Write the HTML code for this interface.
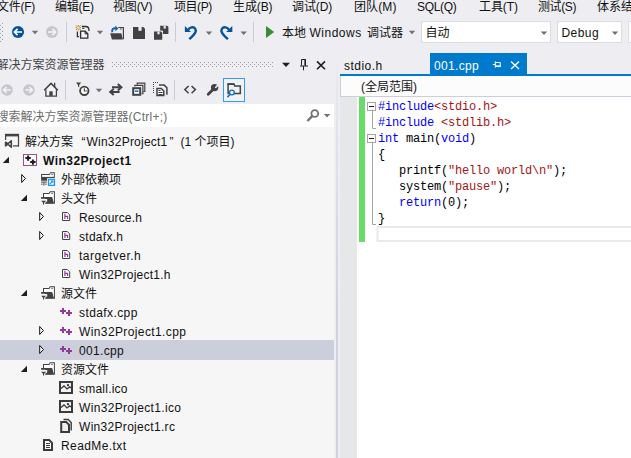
<!DOCTYPE html>
<html><head><meta charset="utf-8">
<style>
html,body{margin:0;padding:0;}
body{width:631px;height:458px;overflow:hidden;background:#EEEEF2;position:relative;font-family:"Liberation Sans","Noto Sans CJK SC",sans-serif;font-size:12px;color:#111;}
.a{position:absolute;white-space:nowrap;}
.t{position:absolute;white-space:nowrap;line-height:19px;height:19px;}
.mi{position:absolute;top:-2px;line-height:19px;font-size:12px;white-space:nowrap;}
.code{position:absolute;left:378px;white-space:pre;font-family:"Liberation Mono",monospace;font-size:12px;line-height:16px;letter-spacing:-0.2px;color:#000;}
.k{color:#0000FF}.s{color:#A31515}
svg{position:absolute;overflow:visible}
</style></head><body>
<div class="mi" style="left:-3px;letter-spacing:-0.25px">文件(F)</div>
<div class="mi" style="left:55px;letter-spacing:-0.28px">编辑(E)</div>
<div class="mi" style="left:113px;letter-spacing:-0.14px">视图(V)</div>
<div class="mi" style="left:174px;letter-spacing:-0.44px">项目(P)</div>
<div class="mi" style="left:233px;letter-spacing:-0.12px">生成(B)</div>
<div class="mi" style="left:292px;letter-spacing:-0.1px">调试(D)</div>
<div class="mi" style="left:354px;letter-spacing:0.1px">团队(M)</div>
<div class="mi" style="left:417px;letter-spacing:-0.33px">SQL(Q)</div>
<div class="mi" style="left:479px;letter-spacing:-0.08px">工具(T)</div>
<div class="mi" style="left:538px;letter-spacing:-0.4px">测试(S)</div>
<div class="mi" style="left:597px;letter-spacing:0px">体系结构</div>
<div class="a" style="left:282px;top:24px;line-height:19px">本地</div>
<div class="a" id="tbtxt" style="left:309.5px;top:24px;line-height:19px;letter-spacing:.5px">Windows</div>
<div class="a" style="left:367px;top:24px;line-height:19px">调试器</div>
<div class="a" style="left:421px;top:21px;width:130px;height:22px;background:#fff;border:1px solid #DBDDE6;box-sizing:border-box"></div>
<div class="a" style="left:425.5px;top:24px;line-height:19px">自动</div>
<div class="a" style="left:557px;top:21px;width:65px;height:22px;background:#fff;border:1px solid #DBDDE6;box-sizing:border-box"></div>
<div class="a" id="dbg" style="left:561.5px;top:24px;line-height:19px;letter-spacing:.44px">Debug</div>
<div class="a" style="left:628px;top:21px;width:10px;height:22px;background:#fff;border:1px solid #DBDDE6;box-sizing:border-box"></div>

<div class="a" id="setitle" style="left:-3.5px;top:56px;line-height:19px;color:#444">解决方案资源管理器</div>
<div class="a" style="left:0;top:104px;width:334px;height:23px;background:#fff"></div>
<div class="a" style="left:0;top:127px;width:334px;height:331px;background:#F6F6F6"></div>
<div class="a" style="left:336px;top:56px;width:2px;height:402px;background:linear-gradient(to bottom,#EEEEF2 0px,#E7E8EF 25px,#E1E2EB 80px,#D0D2DF 250px,#CFD1DE 402px)"></div>
<div class="a" id="srch" style="left:-3.5px;top:107.5px;line-height:19px;color:#6D6D6D">搜索解决方案资源管理器<span style="letter-spacing:.25px">(Ctrl+;)</span></div>
<div class="a" style="left:0;top:339.5px;width:334px;height:20px;background:#CCCEDB"></div>
<div class="t" id="r0" style="left:25px;top:133px">解决方案</div><div class="t" style="left:81.5px;top:133px">“</div><div class="t" id="r0b" style="left:86.5px;top:133px;letter-spacing:.23px">Win32Project1</div><div class="t" style="left:169.5px;top:133px">”</div><div class="t" id="r0c" style="left:180.5px;top:133px">(1 个项目)</div>
<div class="t" id="r1" style="left:43px;top:152px;font-weight:bold;letter-spacing:0.462px;">Win32Project1</div>
<div class="t" id="r2" style="left:61px;top:171px;">外部依赖项</div>
<div class="t" id="r3" style="left:61px;top:190px;">头文件</div>
<div class="t" id="r4" style="left:79px;top:209px;letter-spacing:0.160px;">Resource.h</div>
<div class="t" id="r5" style="left:79px;top:228px;letter-spacing:0.281px;">stdafx.h</div>
<div class="t" id="r6" style="left:79px;top:247px;letter-spacing:0.505px;">targetver.h</div>
<div class="t" id="r7" style="left:79px;top:266px;letter-spacing:0.250px;">Win32Project1.h</div>
<div class="t" id="r8" style="left:61px;top:285px;">源文件</div>
<div class="t" id="r9" style="left:79px;top:304px;letter-spacing:0.405px;">stdafx.cpp</div>
<div class="t" id="r10" style="left:79px;top:323px;letter-spacing:0.385px;">Win32Project1.cpp</div>
<div class="t" id="r11" style="left:79px;top:342px;letter-spacing:0.329px;">001.cpp</div>
<div class="t" id="r12" style="left:61px;top:361px;">资源文件</div>
<div class="t" id="r13" style="left:79px;top:380px;letter-spacing:0.228px;">small.ico</div>
<div class="t" id="r14" style="left:79px;top:399px;letter-spacing:0.326px;">Win32Project1.ico</div>
<div class="t" id="r15" style="left:79px;top:418px;letter-spacing:0.303px;">Win32Project1.rc</div>
<div class="t" id="r16" style="left:61px;top:437px;letter-spacing:0.410px;">ReadMe.txt</div>

<div class="a" style="left:430px;top:53px;width:97px;height:21px;background:#007ACC"></div>
<div class="a" style="left:340px;top:74px;width:291px;height:2px;background:#007ACC"></div>
<div class="a" id="tab1" style="left:344px;top:56.5px;line-height:19px;letter-spacing:.46px">stdio.h</div>
<div class="a" id="tab2" style="left:434px;top:56.5px;line-height:19px;color:#fff;letter-spacing:.33px">001.cpp</div>
<div class="a" style="left:340px;top:76px;width:291px;height:21px;background:#FCFCFC;border-left:1px solid #CCCEDB;border-bottom:1px solid #CCCEDB;box-sizing:border-box"></div>
<div class="a" id="nav" style="left:361px;top:78px;line-height:19px">(全局范围)</div>
<div class="a" style="left:340px;top:97px;width:291px;height:361px;background:#fff"></div>
<div class="a" style="left:340px;top:97px;width:17px;height:361px;background:#E6E7E8"></div>
<div class="a" style="left:359px;top:97px;width:5.5px;height:144.5px;background:#68DC68"></div>
<svg width="631" height="458" viewBox="0 0 631 458" style="left:0;top:0">
<rect x="2" y="23" width="1" height="1" fill="#999"/>
<rect x="0" y="25" width="1" height="1" fill="#999"/>
<rect x="2" y="27" width="1" height="1" fill="#999"/>
<rect x="0" y="29" width="1" height="1" fill="#999"/>
<rect x="2" y="31" width="1" height="1" fill="#999"/>
<rect x="0" y="33" width="1" height="1" fill="#999"/>
<rect x="2" y="35" width="1" height="1" fill="#999"/>
<rect x="0" y="37" width="1" height="1" fill="#999"/>
<rect x="2" y="39" width="1" height="1" fill="#999"/>
<rect x="0" y="41" width="1" height="1" fill="#999"/>
<circle cx="18" cy="32" r="6" fill="#00539C"/>
<path d="M22,32 H14.6 M17.6,28.8 L14.4,32 L17.6,35.2" stroke="#fff" stroke-width="1.7" fill="none"/>
<polygon points="31.8,30.699999999999996 38.2,30.699999999999996 35,34.199999999999996" fill="#717171"/>
<circle cx="52" cy="32" r="6" fill="#C6C7CD"/>
<path d="M48,32 H55.4 M52.4,28.8 L55.6,32 L52.4,35.2" stroke="#F4F4F7" stroke-width="1.7" fill="none"/>
<rect x="66" y="22" width="1" height="20" fill="#C9CBDB"/>
<rect x="175" y="22" width="1" height="20" fill="#C9CBDB"/>
<rect x="253" y="22" width="1" height="20" fill="#C9CBDB"/>
<path d="M76,25.4 L77.4,26.8 M79.2,28.6 L80.6,30 M80.6,25.4 L79.2,26.8 M77.4,28.6 L76,30 M78.3,25 V26.6 M78.3,28.8 V30.4 M75.6,27.7 H77.2 M79.4,27.7 H81" stroke="#C27D1A" stroke-width="1" fill="none"/>
<path d="M81.8,26.5 H85.6 C87.6,26.6 88.9,27.8 88.9,29.6 V31" stroke="#2E2E2E" stroke-width="1.3" fill="none"/>
<path d="M82.2,28.3 H84.4" stroke="#2E2E2E" stroke-width="1" fill="none"/>
<path d="M77.4,31.4 V36.6 H79" stroke="#2E2E2E" stroke-width="1.3" fill="none"/>
<path d="M80.6,31.2 H85.2 L87.8,33.8 V38.2 H80.6 Z" stroke="#2E2E2E" stroke-width="1.3" fill="#F4F4F6"/>
<path d="M85.1,31.3 V33.9 H87.7" stroke="#2E2E2E" stroke-width="1" fill="none"/>
<polygon points="96.8,30.699999999999996 103.2,30.699999999999996 100,34.199999999999996" fill="#717171"/>
<path d="M118.2,27.5 H123.4 V39.2" stroke="#424242" stroke-width="1.2" fill="none"/>
<rect x="119.9" y="28.5" width="1.8" height="1" fill="#424242"/>
<polygon points="110.2,33.2 121.3,33.2 122.9,39.4 111.9,39.4" fill="#424242"/>
<path d="M112.3,32.2 C111.6,29.4 113,27.8 116.4,28.4" stroke="#145FB8" stroke-width="1.9" fill="none"/>
<polygon points="115.4,25.6 118.4,28.5 115.4,31.2" fill="#145FB8"/>
<path d="M133,27 H143.2 L145,28.8 V39 H133 Z" fill="#424242"/>
<rect x="138.4" y="27" width="3.2" height="3.8" fill="#EEEEF2"/>
<path d="M160.2,25.8 H167.2 L168.4,27 V34 H160.2 Z" fill="#424242"/>
<rect x="163.6" y="25.8" width="2.2" height="2.8" fill="#EEEEF2"/>
<rect x="153.2" y="30.6" width="9.8" height="9.8" fill="#EEEEF2"/>
<path d="M154,31.5 H161 L162.2,32.7 V39.8 H154 Z" fill="#424242"/>
<rect x="157.4" y="31.5" width="2.2" height="2.8" fill="#EEEEF2"/>
<path d="M188.3,29.7 C189.6,27.4 193.6,26.2 195.3,28.8 C196.9,31.3 195.2,33.4 189.3,39.2" stroke="#00539C" stroke-width="2.4" fill="none"/><polygon points="184.9,26 184.9,32.1 191,32.1" fill="#00539C"/>
<polygon points="205.8,31.4 212.2,31.4 209,34.9" fill="#717171"/>
<g transform="translate(417.2,0) scale(-1,1)"><path d="M188.3,29.7 C189.6,27.4 193.6,26.2 195.3,28.8 C196.9,31.3 195.2,33.4 189.3,39.2" stroke="#00539C" stroke-width="2.4" fill="none"/><polygon points="184.9,26 184.9,32.1 191,32.1" fill="#00539C"/></g>
<polygon points="240.5,31.4 246.89999999999998,31.4 243.7,34.9" fill="#717171"/>
<polygon points="266,26 266,38 274.2,32" fill="#388A34"/>
<polygon points="408.8,30.699999999999996 415.2,30.699999999999996 412,34.199999999999996" fill="#717171"/>
<polygon points="540.8,31.4 547.2,31.4 544,34.9" fill="#717171"/>
<polygon points="611.8,31.4 618.2,31.4 615,34.9" fill="#717171"/>
<rect x="112" y="62" width="1" height="1" fill="#9a9a9a"/><rect x="112" y="66" width="1" height="1" fill="#9a9a9a"/>
<rect x="114" y="64" width="1" height="1" fill="#9a9a9a"/>
<rect x="116" y="62" width="1" height="1" fill="#9a9a9a"/><rect x="116" y="66" width="1" height="1" fill="#9a9a9a"/>
<rect x="118" y="64" width="1" height="1" fill="#9a9a9a"/>
<rect x="120" y="62" width="1" height="1" fill="#9a9a9a"/><rect x="120" y="66" width="1" height="1" fill="#9a9a9a"/>
<rect x="122" y="64" width="1" height="1" fill="#9a9a9a"/>
<rect x="124" y="62" width="1" height="1" fill="#9a9a9a"/><rect x="124" y="66" width="1" height="1" fill="#9a9a9a"/>
<rect x="126" y="64" width="1" height="1" fill="#9a9a9a"/>
<rect x="128" y="62" width="1" height="1" fill="#9a9a9a"/><rect x="128" y="66" width="1" height="1" fill="#9a9a9a"/>
<rect x="130" y="64" width="1" height="1" fill="#9a9a9a"/>
<rect x="132" y="62" width="1" height="1" fill="#9a9a9a"/><rect x="132" y="66" width="1" height="1" fill="#9a9a9a"/>
<rect x="134" y="64" width="1" height="1" fill="#9a9a9a"/>
<rect x="136" y="62" width="1" height="1" fill="#9a9a9a"/><rect x="136" y="66" width="1" height="1" fill="#9a9a9a"/>
<rect x="138" y="64" width="1" height="1" fill="#9a9a9a"/>
<rect x="140" y="62" width="1" height="1" fill="#9a9a9a"/><rect x="140" y="66" width="1" height="1" fill="#9a9a9a"/>
<rect x="142" y="64" width="1" height="1" fill="#9a9a9a"/>
<rect x="144" y="62" width="1" height="1" fill="#9a9a9a"/><rect x="144" y="66" width="1" height="1" fill="#9a9a9a"/>
<rect x="146" y="64" width="1" height="1" fill="#9a9a9a"/>
<rect x="148" y="62" width="1" height="1" fill="#9a9a9a"/><rect x="148" y="66" width="1" height="1" fill="#9a9a9a"/>
<rect x="150" y="64" width="1" height="1" fill="#9a9a9a"/>
<rect x="152" y="62" width="1" height="1" fill="#9a9a9a"/><rect x="152" y="66" width="1" height="1" fill="#9a9a9a"/>
<rect x="154" y="64" width="1" height="1" fill="#9a9a9a"/>
<rect x="156" y="62" width="1" height="1" fill="#9a9a9a"/><rect x="156" y="66" width="1" height="1" fill="#9a9a9a"/>
<rect x="158" y="64" width="1" height="1" fill="#9a9a9a"/>
<rect x="160" y="62" width="1" height="1" fill="#9a9a9a"/><rect x="160" y="66" width="1" height="1" fill="#9a9a9a"/>
<rect x="162" y="64" width="1" height="1" fill="#9a9a9a"/>
<rect x="164" y="62" width="1" height="1" fill="#9a9a9a"/><rect x="164" y="66" width="1" height="1" fill="#9a9a9a"/>
<rect x="166" y="64" width="1" height="1" fill="#9a9a9a"/>
<rect x="168" y="62" width="1" height="1" fill="#9a9a9a"/><rect x="168" y="66" width="1" height="1" fill="#9a9a9a"/>
<rect x="170" y="64" width="1" height="1" fill="#9a9a9a"/>
<rect x="172" y="62" width="1" height="1" fill="#9a9a9a"/><rect x="172" y="66" width="1" height="1" fill="#9a9a9a"/>
<rect x="174" y="64" width="1" height="1" fill="#9a9a9a"/>
<rect x="176" y="62" width="1" height="1" fill="#9a9a9a"/><rect x="176" y="66" width="1" height="1" fill="#9a9a9a"/>
<rect x="178" y="64" width="1" height="1" fill="#9a9a9a"/>
<rect x="180" y="62" width="1" height="1" fill="#9a9a9a"/><rect x="180" y="66" width="1" height="1" fill="#9a9a9a"/>
<rect x="182" y="64" width="1" height="1" fill="#9a9a9a"/>
<rect x="184" y="62" width="1" height="1" fill="#9a9a9a"/><rect x="184" y="66" width="1" height="1" fill="#9a9a9a"/>
<rect x="186" y="64" width="1" height="1" fill="#9a9a9a"/>
<rect x="188" y="62" width="1" height="1" fill="#9a9a9a"/><rect x="188" y="66" width="1" height="1" fill="#9a9a9a"/>
<rect x="190" y="64" width="1" height="1" fill="#9a9a9a"/>
<rect x="192" y="62" width="1" height="1" fill="#9a9a9a"/><rect x="192" y="66" width="1" height="1" fill="#9a9a9a"/>
<rect x="194" y="64" width="1" height="1" fill="#9a9a9a"/>
<rect x="196" y="62" width="1" height="1" fill="#9a9a9a"/><rect x="196" y="66" width="1" height="1" fill="#9a9a9a"/>
<rect x="198" y="64" width="1" height="1" fill="#9a9a9a"/>
<rect x="200" y="62" width="1" height="1" fill="#9a9a9a"/><rect x="200" y="66" width="1" height="1" fill="#9a9a9a"/>
<rect x="202" y="64" width="1" height="1" fill="#9a9a9a"/>
<rect x="204" y="62" width="1" height="1" fill="#9a9a9a"/><rect x="204" y="66" width="1" height="1" fill="#9a9a9a"/>
<rect x="206" y="64" width="1" height="1" fill="#9a9a9a"/>
<rect x="208" y="62" width="1" height="1" fill="#9a9a9a"/><rect x="208" y="66" width="1" height="1" fill="#9a9a9a"/>
<rect x="210" y="64" width="1" height="1" fill="#9a9a9a"/>
<rect x="212" y="62" width="1" height="1" fill="#9a9a9a"/><rect x="212" y="66" width="1" height="1" fill="#9a9a9a"/>
<rect x="214" y="64" width="1" height="1" fill="#9a9a9a"/>
<rect x="216" y="62" width="1" height="1" fill="#9a9a9a"/><rect x="216" y="66" width="1" height="1" fill="#9a9a9a"/>
<rect x="218" y="64" width="1" height="1" fill="#9a9a9a"/>
<rect x="220" y="62" width="1" height="1" fill="#9a9a9a"/><rect x="220" y="66" width="1" height="1" fill="#9a9a9a"/>
<rect x="222" y="64" width="1" height="1" fill="#9a9a9a"/>
<rect x="224" y="62" width="1" height="1" fill="#9a9a9a"/><rect x="224" y="66" width="1" height="1" fill="#9a9a9a"/>
<rect x="226" y="64" width="1" height="1" fill="#9a9a9a"/>
<rect x="228" y="62" width="1" height="1" fill="#9a9a9a"/><rect x="228" y="66" width="1" height="1" fill="#9a9a9a"/>
<rect x="230" y="64" width="1" height="1" fill="#9a9a9a"/>
<rect x="232" y="62" width="1" height="1" fill="#9a9a9a"/><rect x="232" y="66" width="1" height="1" fill="#9a9a9a"/>
<rect x="234" y="64" width="1" height="1" fill="#9a9a9a"/>
<rect x="236" y="62" width="1" height="1" fill="#9a9a9a"/><rect x="236" y="66" width="1" height="1" fill="#9a9a9a"/>
<rect x="238" y="64" width="1" height="1" fill="#9a9a9a"/>
<rect x="240" y="62" width="1" height="1" fill="#9a9a9a"/><rect x="240" y="66" width="1" height="1" fill="#9a9a9a"/>
<rect x="242" y="64" width="1" height="1" fill="#9a9a9a"/>
<rect x="244" y="62" width="1" height="1" fill="#9a9a9a"/><rect x="244" y="66" width="1" height="1" fill="#9a9a9a"/>
<rect x="246" y="64" width="1" height="1" fill="#9a9a9a"/>
<rect x="248" y="62" width="1" height="1" fill="#9a9a9a"/><rect x="248" y="66" width="1" height="1" fill="#9a9a9a"/>
<rect x="250" y="64" width="1" height="1" fill="#9a9a9a"/>
<rect x="252" y="62" width="1" height="1" fill="#9a9a9a"/><rect x="252" y="66" width="1" height="1" fill="#9a9a9a"/>
<rect x="254" y="64" width="1" height="1" fill="#9a9a9a"/>
<rect x="256" y="62" width="1" height="1" fill="#9a9a9a"/><rect x="256" y="66" width="1" height="1" fill="#9a9a9a"/>
<rect x="258" y="64" width="1" height="1" fill="#9a9a9a"/>
<rect x="260" y="62" width="1" height="1" fill="#9a9a9a"/><rect x="260" y="66" width="1" height="1" fill="#9a9a9a"/>
<rect x="262" y="64" width="1" height="1" fill="#9a9a9a"/>
<rect x="264" y="62" width="1" height="1" fill="#9a9a9a"/><rect x="264" y="66" width="1" height="1" fill="#9a9a9a"/>
<rect x="266" y="64" width="1" height="1" fill="#9a9a9a"/>
<rect x="268" y="62" width="1" height="1" fill="#9a9a9a"/><rect x="268" y="66" width="1" height="1" fill="#9a9a9a"/>
<rect x="270" y="64" width="1" height="1" fill="#9a9a9a"/>
<rect x="272" y="62" width="1" height="1" fill="#9a9a9a"/><rect x="272" y="66" width="1" height="1" fill="#9a9a9a"/>
<polygon points="282,62.8 290,62.8 286,67" fill="#1E1E1E"/>
<path d="M301.5,59.5 H305.5 V65.5 M301.5,59.5 V65.5 M300,66 H308 M303.5,66 V70.3" stroke="#1E1E1E" stroke-width="1" fill="none"/><rect x="304.4" y="59.5" width="1.6" height="6" fill="#1E1E1E"/>
<path d="M317,61.4 L325,69.2 M325,61.4 L317,69.2" stroke="#1E1E1E" stroke-width="1.6" fill="none"/>
<circle cx="7" cy="90" r="5.8" fill="#C6C7CD"/>
<path d="M10.6,90 H3.8 M6.6,87 L3.6,90 L6.6,93" stroke="#F4F4F7" stroke-width="1.6" fill="none"/>
<circle cx="29" cy="90" r="5.8" fill="#C6C7CD"/>
<path d="M25.4,90 H32.2 M29.4,87 L32.4,90 L29.4,93" stroke="#F4F4F7" stroke-width="1.6" fill="none"/>
<path d="M45.9,89.6 V96.2 H56.4 V89.6 L51,84.4 Z" fill="#F4F4F6" stroke="none"/>
<path d="M45.9,89.4 V96.2 H56.4 V89.4" stroke="#424242" stroke-width="1.3" fill="none"/>
<path d="M44.2,90.3 L51,83.5 L57.8,90.3" stroke="#424242" stroke-width="1.6" fill="none"/>
<rect x="54" y="82.8" width="1.3" height="4.4" fill="#424242"/>
<rect x="49.3" y="91.3" width="3.4" height="4.6" fill="#424242"/>
<rect x="65" y="80" width="1" height="20" fill="#C9CBDB"/>
<rect x="174" y="80" width="1" height="20" fill="#C9CBDB"/>
<circle cx="84.3" cy="90.8" r="4.2" fill="#fff" stroke="#424242" stroke-width="1.9"/>
<path d="M84.3,88.2 V91 H86.8" stroke="#424242" stroke-width="1.1" fill="none"/>
<polygon points="76,82.6 81.2,82.6 79.2,85 79.2,87.4 78,86.6 78,85" fill="#424242"/>
<polygon points="95.8,88.7 102.2,88.7 99,92.2" fill="#717171"/>
<path d="M112,87.2 H121 M117.8,84 L121.4,87.2 L117.8,90.4" stroke="#424242" stroke-width="2" fill="none"/>
<path d="M119.6,91.9 H110.6 M113.8,88.7 L110.2,91.9 L113.8,95.1" stroke="#424242" stroke-width="2" fill="none"/>
<path d="M137.2,84.4 V83.1 H144.8 V91.5 H143.6 M134.8,86.6 V85.3 H142.9 V93.6 H141.6" stroke="#424242" stroke-width="1.2" fill="none"/>
<rect x="133.2" y="88.2" width="7" height="6.6" fill="#fff" stroke="#424242" stroke-width="2"/>
<rect x="134.8" y="90.4" width="3.7" height="1.5" fill="#0E70C0"/>
<rect x="153" y="82" width="1" height="1" fill="#424242"/>
<rect x="153" y="84" width="1" height="1" fill="#424242"/>
<rect x="153" y="86" width="1" height="1" fill="#424242"/>
<rect x="153" y="88" width="1" height="1" fill="#424242"/>
<rect x="153" y="90" width="1" height="1" fill="#424242"/>
<rect x="153" y="92" width="1" height="1" fill="#424242"/>
<rect x="155" y="82" width="1" height="1" fill="#424242"/>
<rect x="157" y="82" width="1" height="1" fill="#424242"/>
<path d="M159,85.1 H164.2 L166.9,87.8 V94.8" stroke="#424242" stroke-width="1.5" fill="none"/>
<path d="M157,88.4 H161.2 L163.8,91 V95.6 H157 Z" fill="#fff" stroke="#424242" stroke-width="1.5"/>
<path d="M158.4,90.5 H160.6 M158.4,92.5 H162.6 M158.4,94.5 H162.6" stroke="#424242" stroke-width="1" fill="none"/>
<path d="M188.6,86 L184.8,89.6 L188.6,93.2 M191.6,86 L195.4,89.6 L191.6,93.2" stroke="#424242" stroke-width="1.5" fill="none"/>
<path d="M213,89.6 L208.2,94.2" stroke="#424242" stroke-width="2.8" stroke-linecap="round" fill="none"/>
<circle cx="214.6" cy="87.6" r="3.7" fill="#424242"/>
<polygon points="214.6,87.4 218.4,83.2 219.6,84.6 216,88.2" fill="#EEEEF2"/>
<rect x="223.5" y="78.5" width="21" height="23" fill="#F0F2F8" stroke="#3399FF" stroke-width="1"/>
<path d="M228.1,84.2 H234 L234.8,86 H240.3 V93.4 H228.1 Z" fill="none" stroke="#424242" stroke-width="1.5"/>
<rect x="227.4" y="83.2" width="7" height="1.8" fill="#424242"/>
<circle cx="231.9" cy="92.5" r="2.4" fill="#F0F2F8" stroke="#0E70C0" stroke-width="1.3"/>
<path d="M230.3,94.2 L227.4,97.1" stroke="#0E70C0" stroke-width="1.6" fill="none"/>
<circle cx="314.8" cy="113.5" r="3.4" fill="none" stroke="#717171" stroke-width="1.8"/>
<path d="M312.5,115.9 L307.4,121" stroke="#717171" stroke-width="2.4" fill="none"/>
<polygon points="323.8,113.9 330.2,113.9 327,117.4" fill="#717171"/>
<polygon points="9,156.8 9,163.0 2.8,163.0" fill="#1E1E1E"/>
<polygon points="21.7,174.5 21.7,182.5 25.4,178.5" fill="#fff" stroke="#111" stroke-width="1"/>
<polygon points="27,194.8 27,201.0 20.8,201.0" fill="#1E1E1E"/>
<polygon points="39.7,212.5 39.7,220.5 43.4,216.5" fill="#fff" stroke="#111" stroke-width="1"/>
<polygon points="39.7,231.5 39.7,239.5 43.4,235.5" fill="#fff" stroke="#111" stroke-width="1"/>
<polygon points="27,289.8 27,296.0 20.8,296.0" fill="#1E1E1E"/>
<polygon points="39.7,326.5 39.7,334.5 43.4,330.5" fill="#fff" stroke="#111" stroke-width="1"/>
<polygon points="39.7,345.5 39.7,353.5 43.4,349.5" fill="#fff" stroke="#111" stroke-width="1"/>
<polygon points="27,365.8 27,372.0 20.8,372.0" fill="#1E1E1E"/>
<rect x="5" y="133.8" width="14" height="2.6" fill="#424242"/><rect x="17.9" y="134" width="1.2" height="12.5" fill="#424242"/><rect x="13" y="145.3" width="6" height="1.2" fill="#424242"/><rect x="5" y="134" width="1.2" height="6" fill="#424242"/>
<path d="M11.3,140.8 V147.2 L7.6,144 Z M5.6,142.2 L8,144 L5.6,145.8 Z" fill="none" stroke="#424242" stroke-width="1.6" stroke-linejoin="round"/>
<rect x="23.5" y="154.5" width="13" height="11" fill="#F9F9F9" stroke="#9B4F96" stroke-width="1"/>
<path d="M25.4,158.1 H30.8 M28.1,155.4 V160.8 M30.2,162.1 H35.6 M32.9,159.4 V164.8" stroke="#1E1E1E" stroke-width="2" fill="none"/>
<path d="M41.1,174 H49.3 L50.2,172.2 H54.8 V178.6 H47.4 V180.7 H41.1 Z" fill="#424242"/>
<rect x="42.1" y="175" width="11.7" height="1.9" fill="#fff"/><polygon points="50.5,173.2 53.8,173.2 53.8,175.2 49.6,175.2" fill="#fff"/>
<rect x="51.2" y="173.9" width="1.7" height="0.8" fill="#424242"/>
<rect x="47.2" y="178.1" width="8.2" height="8.2" fill="#F6F6F6"/><rect x="47.9" y="178.8" width="7.2" height="7.2" fill="#1C97EA"/><rect x="49.2" y="180.1" width="4.6" height="4.6" fill="#fff"/>
<polygon points="50.4,180.5 53.4,180.5 53.4,183.5" fill="#1C97EA"/><path d="M52.6,181.3 L49.7,184.2" stroke="#1C97EA" stroke-width="1.2"/>
<rect x="41.1" y="181.6" width="5.8" height="1" fill="#424242"/><rect x="43.4" y="182.6" width="1" height="3" fill="#424242"/><rect x="41.2" y="183.6" width="1.2" height="1.2" fill="#424242"/><rect x="45.4" y="183.6" width="1.2" height="1.2" fill="#424242"/>
<g transform="translate(0,0.0)"><path d="M43,193 H48.8 L50,191.2 H54.9 V203.8 H45.2 V197 H43 Z" fill="#424242"/><path d="M44,194 H49.3 L50.5,192.2 H53.9 V203 L52,197 H44 Z" fill="#fff"/><rect x="51.2" y="192.9" width="1.7" height="0.8" fill="#424242"/><path d="M41.1,197 H52 L53.3,203.3 H45.2 V198.8 H41.1 Z" fill="#424242"/><path d="M40.5,198.9 H47.2 V201.2 L45,203 V205.2 H42 V203 L40.5,201.2 Z" fill="#F6F6F6"/><path d="M41.1,200.7 H46.2 L44.1,202.7 V204.6 H43 V202.7 Z" fill="#424242"/></g>
<g transform="translate(0,95.0)"><path d="M43,193 H48.8 L50,191.2 H54.9 V203.8 H45.2 V197 H43 Z" fill="#424242"/><path d="M44,194 H49.3 L50.5,192.2 H53.9 V203 L52,197 H44 Z" fill="#fff"/><rect x="51.2" y="192.9" width="1.7" height="0.8" fill="#424242"/><path d="M41.1,197 H52 L53.3,203.3 H45.2 V198.8 H41.1 Z" fill="#424242"/><path d="M40.5,198.9 H47.2 V201.2 L45,203 V205.2 H42 V203 L40.5,201.2 Z" fill="#F6F6F6"/><path d="M41.1,200.7 H46.2 L44.1,202.7 V204.6 H43 V202.7 Z" fill="#424242"/></g>
<g transform="translate(0,171.0)"><path d="M43,193 H48.8 L50,191.2 H54.9 V203.8 H45.2 V197 H43 Z" fill="#424242"/><path d="M44,194 H49.3 L50.5,192.2 H53.9 V203 L52,197 H44 Z" fill="#fff"/><rect x="51.2" y="192.9" width="1.7" height="0.8" fill="#424242"/><path d="M41.1,197 H52 L53.3,203.3 H45.2 V198.8 H41.1 Z" fill="#424242"/><path d="M40.5,198.9 H47.2 V201.2 L45,203 V205.2 H42 V203 L40.5,201.2 Z" fill="#F6F6F6"/><path d="M41.1,200.7 H46.2 L44.1,202.7 V204.6 H43 V202.7 Z" fill="#424242"/></g>
<g transform="translate(62,212.0)"><path d="M0.5,0.5 H5.3 L7.7,2.9 V8.5 H0.5 Z" fill="#fff" stroke="#424242" stroke-width="1"/><path d="M2.9,1.8 V7 M2.9,4.4 H5.6 V7" stroke="#92399A" stroke-width="1.2" fill="none"/></g>
<g transform="translate(62,231.0)"><path d="M0.5,0.5 H5.3 L7.7,2.9 V8.5 H0.5 Z" fill="#fff" stroke="#424242" stroke-width="1"/><path d="M2.9,1.8 V7 M2.9,4.4 H5.6 V7" stroke="#92399A" stroke-width="1.2" fill="none"/></g>
<g transform="translate(62,250.0)"><path d="M0.5,0.5 H5.3 L7.7,2.9 V8.5 H0.5 Z" fill="#fff" stroke="#424242" stroke-width="1"/><path d="M2.9,1.8 V7 M2.9,4.4 H5.6 V7" stroke="#92399A" stroke-width="1.2" fill="none"/></g>
<g transform="translate(62,269.0)"><path d="M0.5,0.5 H5.3 L7.7,2.9 V8.5 H0.5 Z" fill="#fff" stroke="#424242" stroke-width="1"/><path d="M2.9,1.8 V7 M2.9,4.4 H5.6 V7" stroke="#92399A" stroke-width="1.2" fill="none"/></g>
<path d="M60,311.0 H66 M63,308.0 V314.0 M66,313.0 H72 M69,310.0 V316.0" stroke="#92399A" stroke-width="2" fill="none"/>
<path d="M60,330.0 H66 M63,327.0 V333.0 M66,332.0 H72 M69,329.0 V335.0" stroke="#92399A" stroke-width="2" fill="none"/>
<path d="M60,349.0 H66 M63,346.0 V352.0 M66,351.0 H72 M69,348.0 V354.0" stroke="#92399A" stroke-width="2" fill="none"/>
<rect x="60" y="382.0" width="12" height="11" fill="#F2F2F2" stroke="#3B3B3B" stroke-width="2"/><path d="M61,388.5 L64,385.9 L67,388.9 L69.6,386.9 L71,387.9" stroke="#3B3B3B" stroke-width="1.3" fill="none"/><circle cx="68" cy="385.1" r="1.2" fill="#3B3B3B"/>
<rect x="60" y="401.0" width="12" height="11" fill="#F2F2F2" stroke="#3B3B3B" stroke-width="2"/><path d="M61,407.5 L64,404.9 L67,407.9 L69.6,405.9 L71,406.9" stroke="#3B3B3B" stroke-width="1.3" fill="none"/><circle cx="68" cy="404.1" r="1.2" fill="#3B3B3B"/>
<path d="M63.5,419.5 H68.2 L71.2,422.5 V430.5" stroke="#3B3B3B" stroke-width="1.4" fill="none"/>
<path d="M61.2,421.9 H66.2 L69,424.7 V431.9 H61.2 Z" stroke="#3B3B3B" stroke-width="2" fill="#EDEDF2"/>
<path d="M44,440.1 H49.2 L52,442.9 V449.9 H44 Z" stroke="#3B3B3B" stroke-width="2" fill="#fff"/>
<path d="M46,443.5 H50 M46,445.5 H50 M46,447.5 H50" stroke="#3B3B3B" stroke-width="1" fill="none"/>
<g transform="translate(0.8,0)"><path d="M492,64.5 H494.5 M494.5,61.4 V67.6 M494.5,62.5 H499.5 V66.5 H494.5" stroke="#fff" stroke-width="1" fill="none"/><rect x="494.5" y="65.4" width="5.5" height="1.6" fill="#fff"/></g>
<path d="M511,61.4 L519,69 M519,61.4 L511,69" stroke="#fff" stroke-width="1.4" fill="none"/>
<rect x="367.5" y="102.5" width="8" height="8" fill="#fff" stroke="#A5A5A5" stroke-width="1"/><path d="M369,106.5 H374" stroke="#1E1E1E" stroke-width="1"/>
<rect x="367.5" y="134.5" width="8" height="8" fill="#fff" stroke="#A5A5A5" stroke-width="1"/><path d="M369,138.5 H374" stroke="#1E1E1E" stroke-width="1"/>
<path d="M372.5,111 V128.5 H376 M372.5,143 V224.5 H376" stroke="#A5A5A5" stroke-width="1" fill="none"/>
<rect x="377.5" y="227" width="260" height="14" fill="#fff" stroke="#EAEAEA" stroke-width="2"/>
</svg>
<div class="code" style="top:99px"><span class="k">#include</span><span class="s">&lt;stdio.h&gt;</span>
<span class="k">#include</span> <span class="s">&lt;stdlib.h&gt;</span>
<span class="k">int</span> main(<span class="k">void</span>)
{
   printf(<span class="s">"hello world\n"</span>);
   system(<span class="s">"pause"</span>);
   <span class="k">return</span>(0);
}</div>
</body></html>
